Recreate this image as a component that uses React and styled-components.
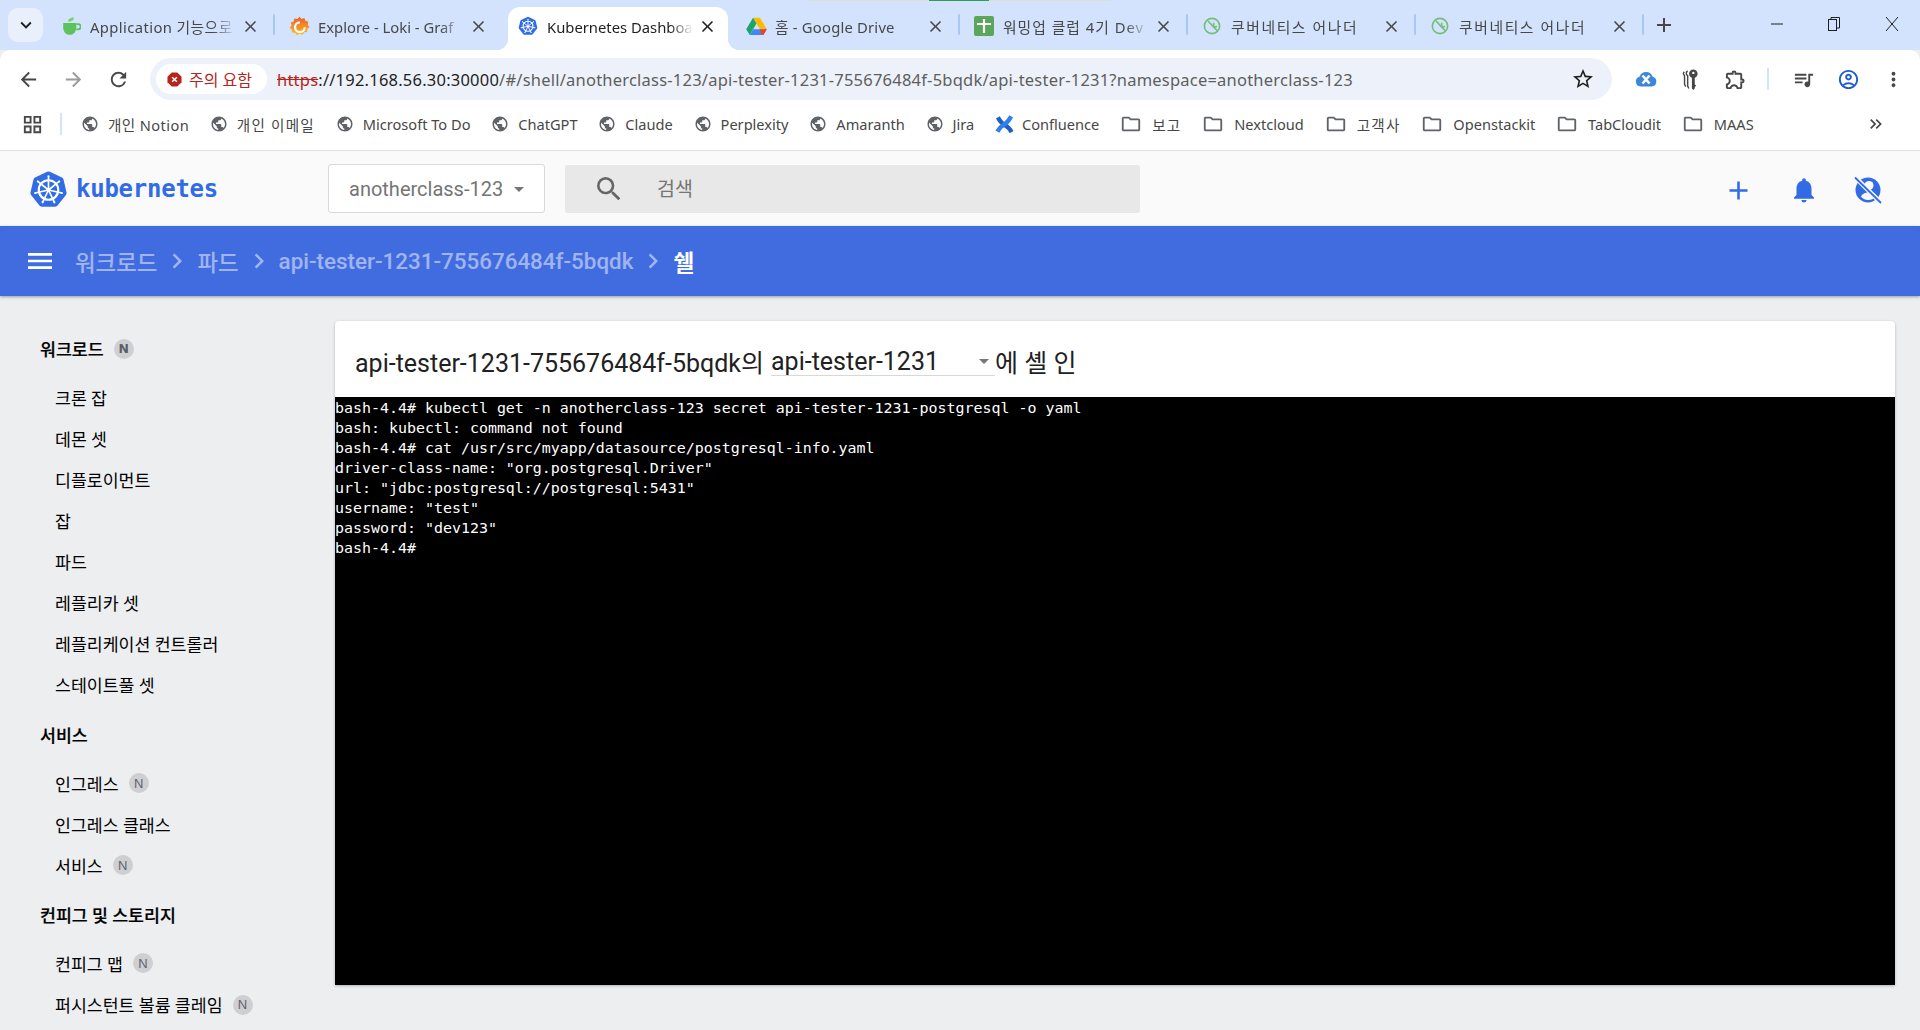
import React from "react"
import styled, { createGlobalStyle } from "styled-components"
import {
  MdArrowBack,
  MdArrowForward,
  MdRefresh,
  MdStarBorder,
  MdMoreVert,
  MdOutlineExtension,
  MdQueueMusic,
  MdOutlineAccountCircle,
  MdPublic,
  MdOutlineFolder,
  MdClose,
  MdAdd,
  MdKeyboardArrowDown,
  MdKeyboardDoubleArrowRight,
  MdNotifications,
  MdMenu,
  MdSearch,
  MdChevronRight,
  MdArrowDropDown,
  MdOutlineGridView,
} from "react-icons/md"

const UI_FONT = `"Noto Sans", "Noto Sans CJK KR", sans-serif`
const APP_FONT = `Roboto, "Noto Sans CJK KR", sans-serif`

const GlobalStyle = createGlobalStyle`
  html, body {
    margin: 0;
    padding: 0;
    background: #edeef0;
    overflow: hidden;
  }
  * {
    box-sizing: border-box;
  }
`

const Page = styled.div`
  position: relative;
  width: 1920px;
  height: 1030px;
  overflow: hidden;
  display: flex;
  flex-direction: column;
  background: #edeef0;
`

const ShareStrip = styled.div`
  position: absolute;
  top: 0;
  left: 808px;
  width: 302px;
  height: 1px;
  background: linear-gradient(to right, #ddd 0 40%, #2e9e4f 40% 60%, #ddd 60%);
`

const TabStrip = styled.div`
  height: 50px;
  flex: none;
  background: #d3e3fd;
  display: flex;
  align-items: flex-end;
  padding-left: 8px;
`

const TabListButton = styled.div`
  width: 35px;
  height: 34px;
  margin: 0 3px 8px 0;
  border-radius: 10px;
  background: #e9f0fc;
  color: #1f1f1f;
  display: flex;
  align-items: center;
  justify-content: center;
  font-size: 22px;
`

const Tab = styled.div`
  position: relative;
  width: 228px;
  height: 43px;
  flex: none;
  display: flex;
  align-items: center;
  padding: 0 15px 5px 17px;
  color: ${(p) => (p.$active ? "#1f1f1f" : "#474747")};
  font: 14.8px/20px ${UI_FONT};
  background: ${(p) => (p.$active ? "#fff" : "transparent")};
  border-radius: 12px 12px 0 0;
  ${(p) => p.$active && "margin: 0 3px 0 6px; width: 220px; padding: 0 9px 5px 12px;"}
  &::after {
    content: "";
    display: ${(p) => (p.$divider ? "block" : "none")};
    position: absolute;
    right: -1px;
    top: 7px;
    width: 2px;
    height: 21px;
    border-radius: 1px;
    background: #a9c6f5;
  }
  &::before {
    content: "";
    display: ${(p) => (p.$active ? "block" : "none")};
    position: absolute;
    bottom: 0;
    left: -12px;
    width: 244px;
    height: 12px;
    background:
      radial-gradient(circle at 0 0, #d3e3fd 12px, #fff 12.5px) left / 12px 12px no-repeat,
      radial-gradient(circle at 100% 0, #d3e3fd 12px, #fff 12.5px) right / 12px 12px no-repeat;
  }
`

const TabIcon = styled.span`
  width: 16px;
  height: 20px;
  flex: none;
  margin-right: 11px;
  display: flex;
  align-items: center;
  justify-content: center;
  svg {
    flex: none;
  }
`

const TabTitle = styled.span`
  width: 146px;
  flex: none;
  margin-top: 2px;
  white-space: nowrap;
  overflow: hidden;
  letter-spacing: ${(p) => p.$ls || 0}px;
  -webkit-mask-image: linear-gradient(to right, #000 84%, transparent 100%);
  mask-image: linear-gradient(to right, #000 84%, transparent 100%);
`

const TabClose = styled.span`
  margin-left: 5px;
  display: flex;
  font-size: 19px;
  color: ${(p) => (p.$active ? "#1f1f1f" : "#474747")};
  stroke: currentColor;
  stroke-width: 1;
`

const NewTab = styled.div`
  margin: 0 0 13px 9px;
  display: flex;
  font-size: 24px;
  color: #474747;
`

const WindowButtons = styled.div`
  margin-left: auto;
  align-self: flex-start;
  height: 50px;
  display: flex;
  align-items: center;
  padding: 0 21px 2px 0;
  gap: 45px;
`

const Toolbar = styled.div`
  height: 54px;
  flex: none;
  background: #fff;
  border-radius: 10px 10px 0 0;
  display: flex;
  align-items: flex-start;
  padding: 8px 0 0 6px;
`

const NavButton = styled.span`
  width: 45px;
  height: 42px;
  flex: none;
  display: flex;
  align-items: center;
  justify-content: center;
  font-size: 23px;
  color: ${(p) => p.$color || "#474747"};
`

const AddressBar = styled.div`
  width: 1462px;
  height: 42px;
  margin-left: 9px;
  flex: none;
  border-radius: 21px;
  background: #edf2fa;
  display: flex;
  align-items: center;
  padding: 0 17px 0 6px;
`

const SecurityChip = styled.div`
  width: 111px;
  height: 30px;
  flex: none;
  border-radius: 15px;
  background: #fff;
  display: flex;
  align-items: center;
  gap: 7px;
  padding-left: 11px;
  color: #b3261e;
  font: 16px ${UI_FONT};
  white-space: nowrap;
`

const Url = styled.div`
  margin-left: 10px;
  flex: 1;
  font: 16.5px ${UI_FONT};
  letter-spacing: 0.22px;
  color: #1f1f1f;
  white-space: nowrap;
  span {
    color: #5e5e5e;
  }
  s {
    color: #b3261e;
  }
`

const StarIcon = styled.span`
  display: flex;
  font-size: 24px;
  color: #1f1f1f;
`

const ExtensionRow = styled.div`
  display: flex;
  align-items: center;
  margin-left: 11px;
`

const ToolDivider = styled.span`
  width: 2px;
  height: 22px;
  background: #d3e3fd;
  margin: 0 12px 0 9px;
  flex: none;
`

const BookmarkBar = styled.div`
  height: 46px;
  flex: none;
  background: #fff;
  display: flex;
  align-items: center;
  padding: 0 0 6px 21px;
  font: 14.6px ${UI_FONT};
  color: #474747;
`

const AppsIcon = styled.span`
  display: flex;
  font-size: 23px;
  color: #474747;
`

const BookmarkDivider = styled.span`
  width: 2px;
  height: 22px;
  margin: 0 19px 0 16px;
  background: #d3e3fd;
  flex: none;
`

const Bookmark = styled.div`
  display: flex;
  align-items: center;
  gap: ${(p) => p.$gap || 9}px;
  margin-right: 20.8px;
  white-space: nowrap;
  letter-spacing: ${(p) => p.$ls || 0}px;
  svg {
    flex: none;
    color: #5f6368;
  }
`

const MoreBookmarks = styled.span`
  margin-left: auto;
  margin-right: 34px;
  display: flex;
  font-size: 20px;
  color: #474747;
`

const AppHeader = styled.header`
  height: 76px;
  flex: none;
  background: #fafafa;
  border-top: 1px solid #e0e0e0;
  display: flex;
  align-items: center;
  padding: 0 0 0 29px;
`

const LogoLink = styled.div`
  width: 299px;
  flex: none;
  display: flex;
  align-items: center;
  gap: 8px;
  padding-top: 1px;
`

const LogoText = styled.span`
  font: bold 24px "DejaVu Sans Mono", monospace;
  letter-spacing: -0.25px;
  color: #326ce5;
`

const NamespaceSelect = styled.div`
  width: 217px;
  height: 49px;
  flex: none;
  border: 1px solid #d9d9d9;
  border-radius: 3px;
  background: #fff;
  display: flex;
  align-items: center;
  padding-left: 20px;
  font: 20px ${APP_FONT};
  color: #757575;
  svg {
    margin-left: 4px;
    font-size: 24px;
  }
`

const SearchBox = styled.div`
  width: 575px;
  height: 48px;
  margin-left: 20px;
  flex: none;
  border-radius: 3px;
  background: #e8e8e8;
  display: flex;
  align-items: center;
  padding: 0 0 2px 28px;
  gap: 32px;
  font: 19.5px ${APP_FONT};
  color: #757575;
  svg {
    font-size: 32px;
    color: #666;
    margin-top: 2px;
  }
`

const HeaderActions = styled.div`
  margin-left: auto;
  display: flex;
  align-items: center;
  gap: 35px;
  padding: 3px 38px 0 0;
  color: #326ce5;
  svg {
    display: block;
  }
`

const BlueBar = styled.div`
  height: 70px;
  flex: none;
  background: #416ce0;
  box-shadow: 0 1px 3px rgba(0, 0, 0, 0.35);
  display: flex;
  align-items: center;
  padding: 0 0 1px 24px;
  position: relative;
  font: 500 22.4px ${APP_FONT};
  color: rgba(255, 255, 255, 0.5);
`

const MenuIcon = styled.span`
  display: flex;
  font-size: 32px;
  color: #fff;
  margin-right: 19px;
  stroke: #fff;
  stroke-width: 0.4;
`

const Crumb = styled.span`
  color: ${(p) => (p.$current ? "#fff" : "inherit")};
  font-weight: ${(p) => (p.$current ? 700 : 500)};
  white-space: nowrap;
`

const CrumbArrow = styled.span`
  display: flex;
  margin: 0 5px;
  font-size: 30px;
`

const Body = styled.div`
  flex: 1;
  min-height: 0;
  display: flex;
`

const Sidebar = styled.nav`
  width: 335px;
  flex: none;
  padding: 32px 0 0 40px;
  font: 17.3px ${APP_FONT};
  color: #000;
`

const SectionTitle = styled.div`
  height: 41px;
  display: flex;
  align-items: center;
  margin-bottom: 7.5px;
  font-weight: 500;
  -webkit-text-stroke: 0.2px #000;
`

const NavItem = styled.div`
  height: 41.14px;
  display: flex;
  align-items: center;
  padding-left: 15px;
  &:last-child {
    margin-bottom: 8.5px;
  }
`

const Badge = styled.span`
  width: 20px;
  height: 20px;
  margin-left: 10px;
  border-radius: 50%;
  background: #cfcfd1;
  color: #5e636e;
  display: flex;
  align-items: center;
  justify-content: center;
  font: ${(p) => (p.$bold ? 700 : 400)} 13px "Liberation Sans", sans-serif;
`

const Main = styled.main`
  flex: 1;
  padding: 25px 25px 0 0;
`

const Card = styled.section`
  height: 664px;
  background: #fff;
  border-radius: 4px 4px 0 0;
  box-shadow: 0 1px 3px rgba(0, 0, 0, 0.25);
  display: flex;
  flex-direction: column;
`

const CardTitle = styled.div`
  height: 76px;
  flex: none;
  display: flex;
  align-items: center;
  padding: 3px 0 0 20px;
  font: 25px ${APP_FONT};
  color: #212121;
  white-space: nowrap;
`

const ContainerSelect = styled.div`
  width: 224px;
  height: 31px;
  margin: 0 0 0 7px;
  padding-top: 2px;
  border-bottom: 1px solid #d8d8d8;
  display: flex;
  align-items: center;
  justify-content: space-between;
  svg {
    font-size: 24px;
    color: #757575;
    margin-right: -1px;
  }
`

const Terminal = styled.pre`
  flex: 1;
  margin: 0;
  padding-top: 1px;
  background: #000;
  color: #fff;
  font: 14.94px/20px "DejaVu Sans Mono", monospace;
  overflow: hidden;
`

// favicons and small drawings

const AppleIcon = () => (
  <svg viewBox="0 0 16 16" width="19" height="19">
    <path d="M1 5h11v4c0 3-2 6-5.500 6S1 12 1 9z" fill="#5cc25c" />
    <path d="M12 6h1.500a2 2 0 0 1 0 4.500H12" fill="none" stroke="#5cc25c" strokeWidth="1.500" />
    <path d="M5 4c0-2 2-3.500 5-3.500C10 3 8 4 5 4z" fill="#7ccf6b" />
  </svg>
)

const GrafanaIcon = () => (
  <svg viewBox="0 0 16 16" width="21" height="21">
    <path d="M8 .5l1.500 1.700 2.200-.6.800 2.100 2.200.6-.4 2.300 1.400 1.700-1.700 1.500-.2 2.300-2.300.3-1.200 2-2.200-.8-2.100 1-1.400-1.900-2.300-.2-.2-2.300L.5 9 2 7.200 1.400 5l2.100-.9.600-2.200 2.200.3z" fill="url(#graf)" />
    <defs>
      <linearGradient id="graf" x1="0" y1="1" x2="0" y2="0">
        <stop offset="0" stopColor="#fcc021" />
        <stop offset="1" stopColor="#f05a28" />
      </linearGradient>
    </defs>
    <circle cx="8.300" cy="8.500" r="3.700" fill="none" stroke="#fff" strokeWidth="1.700" strokeDasharray="17 6" />
    <circle cx="8.300" cy="8.500" r="1.500" fill="#f78f20" />
  </svg>
)

const K8sLogo = ({ size }) => {
  const spokes = [0, 1, 2, 3, 4, 5, 6].map((i) => (i * 360) / 7)
  return (
    <svg viewBox="0 0 40 40" width={size} height={size}>
      <path
        d="M20 1.500a3 3 0 0 1 1.400.300l12.400 6a3 3 0 0 1 1.600 2l3.100 13.400a3 3 0 0 1-.6 2.500l-8.600 10.800a3 3 0 0 1-2.300 1.100H13a3 3 0 0 1-2.300-1.100L2.100 25.700a3 3 0 0 1-.6-2.500L4.600 9.800a3 3 0 0 1 1.600-2l12.400-6A3 3 0 0 1 20 1.500z"
        fill="#326ce5"
      />
      <circle cx="20" cy="20.500" r="10" fill="none" stroke="#fff" strokeWidth="2.200" />
      <circle cx="20" cy="20.500" r="2.200" fill="#fff" />
      {spokes.map((a) => (
        <g key={a} transform={`rotate(${a} 20 20.500)`}>
          <line x1="20" y1="20.500" x2="20" y2="6.500" stroke="#fff" strokeWidth="1.700" />
          <circle cx="20" cy="6.500" r="1.100" fill="#fff" />
        </g>
      ))}
    </svg>
  )
}

const DriveIcon = () => (
  <svg viewBox="0 0 16 14" width="21" height="18">
    <path d="M5.300.5h5.400L16 9.500h-5.400z" fill="#fbbc04" />
    <path d="M5.300.5L0 9.500l2.700 4.500L8 5z" fill="#1fa463" />
    <path d="M2.700 14h10.600l2.700-4.500H5.400z" fill="#4285f4" />
    <path d="M13.300 14L16 9.500h-5.400l1.300 4.500z" fill="#ea4335" />
  </svg>
)

const SheetIcon = () => (
  <svg viewBox="0 0 20 20" width="20" height="20">
    <rect width="20" height="20" rx="2" fill="#5aa65d" />
    <path d="M10 3v14M3 8h14" stroke="#fff" strokeWidth="2.200" />
  </svg>
)

const LeafIcon = () => (
  <svg viewBox="0 0 16 16" width="18" height="18" fill="none" stroke="#72bf78" strokeWidth="1.400">
    <circle cx="8" cy="8" r="6.800" />
    <path d="M4.500 3.500L9.500 9M9.500 9v-4M9.500 9l3-.5M9.500 9l3.500 3.500" />
  </svg>
)

const ErrorIcon = () => (
  <svg viewBox="0 0 16 16" width="15" height="15">
    <path d="M5 .5h6L15.500 5v6L11 15.500H5L.5 11V5z" fill="#b3261e" />
    <path d="M5.500 5.500l5 5M10.500 5.500l-5 5" stroke="#fff" strokeWidth="1.600" />
  </svg>
)

const CloudIcon = () => (
  <svg viewBox="0 0 22 16" width="22" height="16">
    <path d="M5.500 15.500a5 5 0 0 1-1-9.800 7 7 0 0 1 13.200 0 5 5 0 0 1-1 9.800z" fill="#3c87dc" />
    <path d="M7.500 4.500l7 8M14.500 4.500l-7 8" stroke="#fff" strokeWidth="2.600" />
  </svg>
)

const KeysIcon = () => (
  <svg viewBox="0 0 18 22" width="17" height="21">
    <g fill="none" stroke="#474747" strokeWidth="1.500">
      <path d="M2.500 3a2 2 0 0 0-1 1.700c0 1 .6 1.800 1.200 2.200V16l1.200 2.500" />
      <path d="M6 2a2.500 2.500 0 0 0-1.500 2.500c0 1.100.7 2 1.500 2.500v11l1.200 2.500" />
    </g>
    <circle cx="12" cy="5" r="4.500" fill="#474747" />
    <circle cx="12" cy="4" r="1.300" fill="#fff" />
    <path d="M10.500 8h3v8l1.500 1.500-1.500 1.500v1.500l-1.500 1.500-1.500-1.500z" fill="#474747" />
  </svg>
)

const ConfluenceIcon = () => (
  <svg viewBox="0 0 20 22" width="19" height="21" fill="none" strokeWidth="4.600">
    <path d="M3 3.500c2.500 4.500 5 7 8 8.500 2.500 1.300 4.500 3.500 6.500 7" stroke="#1c62c4" />
    <path d="M17 2.500c-2.500 4.500-4.500 7-8 9-2.500 1.500-4.500 3.500-6.500 7" stroke="#2f80ed" />
  </svg>
)

const BlockedAccountIcon = () => (
  <svg viewBox="0 0 28 28" width="28" height="28">
    <circle cx="14" cy="14" r="12.500" fill="#326ce5" />
    <circle cx="15" cy="9.500" r="4.500" fill="#fafafa" />
    <path d="M7 20.500c2-5 13-6 15-1-2 3-4 4.500-8 4.500-3 0-5.500-1.500-7-3.500z" fill="#fafafa" />
    <path d="M1.500 1.500l25 25" stroke="#fafafa" strokeWidth="4.500" />
    <path d="M1 1.500l26 25.500" stroke="#326ce5" strokeWidth="1.800" />
  </svg>
)

const MinimizeIcon = () => (
  <svg width="12" height="12" viewBox="0 0 12 12">
    <path d="M0 6h12" stroke="#1f1f1f" strokeWidth="1" />
  </svg>
)

const RestoreIcon = () => (
  <svg width="12" height="14" viewBox="0 0 12 14" fill="none" stroke="#1f1f1f">
    <rect x="0.500" y="2.500" width="8" height="11" />
    <path d="M3 2.500V.500h8.500v10.500H8.500" />
  </svg>
)

const CloseIcon = () => (
  <svg width="14" height="14" viewBox="0 0 14 14">
    <path d="M1 0l12 14M13 0L1 14" stroke="#1f1f1f" strokeWidth="1" />
  </svg>
)

const tabs = [
  { title: "Application 기능으로", icon: <AppleIcon />, ls: 0.4, divider: true },
  { title: "Explore - Loki - Graf", icon: <GrafanaIcon /> },
  { title: "Kubernetes Dashboa", icon: <K8sLogo size={20} />, active: true },
  { title: "홈 - Google Drive", icon: <DriveIcon />, ls: 0.2, divider: true },
  { title: "워밍업 클럽 4기 Dev", icon: <SheetIcon />, ls: 1, divider: true },
  { title: "쿠버네티스 어나더", icon: <LeafIcon />, ls: 1.6, divider: true },
  { title: "쿠버네티스 어나더", icon: <LeafIcon />, ls: 1.6, divider: true },
]

const siteBookmarks = [
  { name: "개인 Notion", ls: 0.4 },
  { name: "개인 이메일", ls: 1.2 },
  { name: "Microsoft To Do" },
  { name: "ChatGPT" },
  { name: "Claude" },
  { name: "Perplexity" },
  { name: "Amaranth" },
  { name: "Jira" },
]

const folderBookmarks = [
  { name: "보고", ls: 1.2 },
  { name: "Nextcloud" },
  { name: "고객사", ls: 1.2 },
  { name: "Openstackit" },
  { name: "TabCloudit" },
  { name: "MAAS" },
]

const navGroups = [
  {
    title: "워크로드",
    badge: true,
    items: [
      { name: "크론 잡" },
      { name: "데몬 셋" },
      { name: "디플로이먼트" },
      { name: "잡" },
      { name: "파드" },
      { name: "레플리카 셋" },
      { name: "레플리케이션 컨트롤러" },
      { name: "스테이트풀 셋" },
    ],
  },
  {
    title: "서비스",
    items: [
      { name: "인그레스", badge: true },
      { name: "인그레스 클래스" },
      { name: "서비스", badge: true },
    ],
  },
  {
    title: "컨피그 및 스토리지",
    items: [
      { name: "컨피그 맵", badge: true },
      { name: "퍼시스턴트 볼륨 클레임", badge: true },
    ],
  },
]

const terminalText = `bash-4.4# kubectl get -n anotherclass-123 secret api-tester-1231-postgresql -o yaml
bash: kubectl: command not found
bash-4.4# cat /usr/src/myapp/datasource/postgresql-info.yaml
driver-class-name: "org.postgresql.Driver"
url: "jdbc:postgresql://postgresql:5431"
username: "test"
password: "dev123"
bash-4.4# `

const App = () => (
  <Page>
    <GlobalStyle />
    <ShareStrip />
    <TabStrip>
      <TabListButton>
        <MdKeyboardArrowDown />
      </TabListButton>
      {tabs.map((t, i) => (
        <Tab key={i} $active={t.active} $divider={t.divider}>
          <TabIcon>{t.icon}</TabIcon>
          <TabTitle $ls={t.ls}>{t.title}</TabTitle>
          <TabClose $active={t.active}>
            <MdClose />
          </TabClose>
        </Tab>
      ))}
      <NewTab>
        <MdAdd />
      </NewTab>
      <WindowButtons>
        <MinimizeIcon />
        <RestoreIcon />
        <CloseIcon />
      </WindowButtons>
    </TabStrip>

    <Toolbar>
      <NavButton>
        <MdArrowBack />
      </NavButton>
      <NavButton $color="#9a9a9a">
        <MdArrowForward />
      </NavButton>
      <NavButton>
        <MdRefresh />
      </NavButton>
      <AddressBar>
        <SecurityChip>
          <ErrorIcon />
          주의 요함
        </SecurityChip>
        <Url>
          <s>https</s>
          ://192.168.56.30:30000
          <span>/#/shell/anotherclass-123/api-tester-1231-755676484f-5bqdk/api-tester-1231?namespace=anotherclass-123</span>
        </Url>
        <StarIcon>
          <MdStarBorder />
        </StarIcon>
      </AddressBar>
      <ExtensionRow>
        <NavButton>
          <CloudIcon />
        </NavButton>
        <NavButton>
          <KeysIcon />
        </NavButton>
        <NavButton>
          <MdOutlineExtension />
        </NavButton>
        <ToolDivider />
        <NavButton>
          <MdQueueMusic />
        </NavButton>
        <NavButton $color="#1f5ad6">
          <MdOutlineAccountCircle />
        </NavButton>
        <NavButton>
          <MdMoreVert />
        </NavButton>
      </ExtensionRow>
    </Toolbar>

    <BookmarkBar>
      <AppsIcon>
        <MdOutlineGridView />
      </AppsIcon>
      <BookmarkDivider />
      {siteBookmarks.map((b) => (
        <Bookmark key={b.name} $ls={b.ls}>
          <MdPublic size={18} />
          {b.name}
        </Bookmark>
      ))}
      <Bookmark $gap={8}>
        <ConfluenceIcon />
        Confluence
      </Bookmark>
      {folderBookmarks.map((b) => (
        <Bookmark key={b.name} $gap={10} $ls={b.ls}>
          <MdOutlineFolder size={22} />
          {b.name}
        </Bookmark>
      ))}
      <MoreBookmarks>
        <MdKeyboardDoubleArrowRight />
      </MoreBookmarks>
    </BookmarkBar>

    <AppHeader>
      <LogoLink>
        <K8sLogo size={39} />
        <LogoText>kubernetes</LogoText>
      </LogoLink>
      <NamespaceSelect>
        anotherclass-123
        <MdArrowDropDown />
      </NamespaceSelect>
      <SearchBox>
        <MdSearch />
        검색
      </SearchBox>
      <HeaderActions>
        <MdAdd size={31} />
        <MdNotifications size={30} />
        <BlockedAccountIcon />
      </HeaderActions>
    </AppHeader>

    <BlueBar>
      <MenuIcon>
        <MdMenu />
      </MenuIcon>
      <Crumb>워크로드</Crumb>
      <CrumbArrow>
        <MdChevronRight />
      </CrumbArrow>
      <Crumb>파드</Crumb>
      <CrumbArrow>
        <MdChevronRight />
      </CrumbArrow>
      <Crumb>api-tester-1231-755676484f-5bqdk</Crumb>
      <CrumbArrow>
        <MdChevronRight />
      </CrumbArrow>
      <Crumb $current>쉘</Crumb>
    </BlueBar>

    <Body>
      <Sidebar>
        {navGroups.map((g) => (
          <div key={g.title}>
            <SectionTitle>
              {g.title}
              {g.badge && <Badge $bold>N</Badge>}
            </SectionTitle>
            {g.items.map((item) => (
              <NavItem key={item.name}>
                {item.name}
                {item.badge && <Badge>N</Badge>}
              </NavItem>
            ))}
          </div>
        ))}
      </Sidebar>
      <Main>
        <Card>
          <CardTitle>
            api-tester-1231-755676484f-5bqdk의
            <ContainerSelect>
              api-tester-1231
              <MdArrowDropDown />
            </ContainerSelect>
            에 셸 인
          </CardTitle>
          <Terminal>{terminalText}</Terminal>
        </Card>
      </Main>
    </Body>
  </Page>
)

export default App
